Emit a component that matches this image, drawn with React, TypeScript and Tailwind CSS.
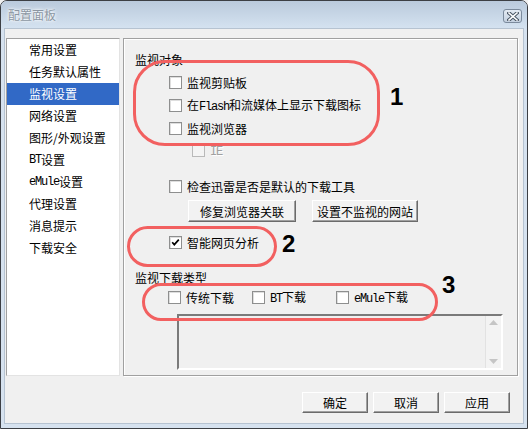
import React from "react";

function Lat({ children }: { children: React.ReactNode }) {
  return (
    <span className="[font-family:'Liberation_Mono',monospace] tracking-[-1.2px]">
      {children}
    </span>
  );
}

function Box({ checked, disabled }: { checked?: boolean; disabled?: boolean }) {
  return (
    <span
      className={
        disabled
          ? "relative block w-[13px] h-[13px] shrink-0 border border-[#b9b9b9] bg-[#f4f4f4]"
          : "relative block w-[13px] h-[13px] shrink-0 border border-[#8e8f8f] bg-white shadow-[inset_1px_1px_0_#dedede]"
      }
    >
      {checked && (
        <svg width="11" height="11" viewBox="0 0 11 11" className="absolute left-0 top-0">
          <path d="M2.2 5.2 L4.3 7.6 L8.8 2.6" fill="none" stroke="#000" strokeWidth="1.7" />
        </svg>
      )}
    </span>
  );
}

function Row({
  children,
  checked,
  disabled,
}: {
  children: React.ReactNode;
  checked?: boolean;
  disabled?: boolean;
}) {
  return (
    <div className="flex items-center h-[13px]">
      <Box checked={checked} disabled={disabled} />
      <span
        className={
          disabled
            ? "ml-[5px] leading-[13px] whitespace-nowrap text-[#a0a0a0] [text-shadow:1px_1px_0_#ffffff]"
            : "ml-[5px] leading-[13px] whitespace-nowrap"
        }
      >
        {children}
      </span>
    </div>
  );
}

function Btn({ children, w, h }: { children: React.ReactNode; w: string; h: string }) {
  return (
    <div
      className={`${w} ${h} flex items-center justify-center bg-[#f2f2f2] border border-t-[#ffffff] border-l-[#ffffff] border-r-[#6b6b6b] border-b-[#6b6b6b] shadow-[inset_-1px_-1px_0_#a0a0a0] leading-[13px] whitespace-nowrap`}
    >
      {children}
    </div>
  );
}

const items = [
  "常用设置",
  "任务默认属性",
  "监视设置",
  "网络设置",
  "图形/外观设置",
  "BT设置",
  "eMule设置",
  "代理设置",
  "消息提示",
  "下载安全",
];

export default function App() {
  return (
    <div className="relative w-[528px] h-[429px] overflow-hidden bg-[#f0f0f0]">
      <div className="w-[528px] h-[429px] flex flex-col border border-[#3c3f44] rounded-t-[7px] bg-[#d6e2ef] text-[12px] text-black [font-family:'Noto_Sans_CJK_SC',sans-serif]">
        {/* title bar */}
        <div className="h-[27px] shrink-0 flex items-start rounded-t-[6px] bg-gradient-to-b from-[#bacadc] to-[#d4e2f0]">
          <div className="ml-[7px] mt-[6px] leading-[16px] text-[12px] text-[#8b96a2] [text-shadow:0_0_4px_#ffffff,0_0_2px_#ffffff]">
            配置面板
          </div>
          <div className="ml-auto mr-[5px] mt-[8px] w-[19px] h-[14px] rounded-[3px] border border-[#7b8a9c] bg-gradient-to-b from-[#e4ebf3] to-[#c3d0df] flex items-center justify-center">
            <svg width="12" height="9" viewBox="0 0 12 9">
              <path d="M2 1 L10 8 M10 1 L2 8" stroke="#4a5664" strokeWidth="3.6" strokeLinecap="square" />
              <path d="M2 1 L10 8 M10 1 L2 8" stroke="#ffffff" strokeWidth="1.6" strokeLinecap="square" />
            </svg>
          </div>
        </div>

        {/* client */}
        <div className="flex-1 mx-[3px] mb-[4px] bg-[#f0f0f0] border border-[#b6c3d1] flex flex-col">
          <div className="flex pl-[1px] pt-[9px] pr-[4px]">
            {/* left list */}
            <div className="w-[114px] h-[338px] bg-white border border-t-[#a0a0a0] border-l-[#a0a0a0] border-r-[#e3e3e3] border-b-[#e3e3e3] flex flex-col">
              {items.map((t, i) => (
                <div
                  key={t}
                  className={
                    i === 2
                      ? "h-[22px] shrink-0 flex items-center pl-[22px] bg-[#3169c6] text-white whitespace-nowrap"
                      : "h-[22px] shrink-0 flex items-center pl-[22px] whitespace-nowrap"
                  }
                >
                  {t === "BT设置" ? (
                    <>
                      <Lat>BT</Lat>设置
                    </>
                  ) : t === "eMule设置" ? (
                    <>
                      <Lat>eMule</Lat>设置
                    </>
                  ) : (
                    t
                  )}
                </div>
              ))}
            </div>

            {/* right panel */}
            <div className="ml-[3px] w-[395px] h-[338px] border border-t-[#a0a0a0] border-l-[#a0a0a0] border-r-[#a0a0a0] border-b-[#a0a0a0] shadow-[inset_1px_1px_0_#ffffff,1px_1px_0_#ffffff] flex flex-col pl-[11px] pt-[14px]">
              <div className="h-[13px] leading-[13px]">监视对象</div>
              <div className="pl-[34px] mt-[10px]">
                <Row>监视剪贴板</Row>
              </div>
              <div className="pl-[34px] mt-[10px]">
                <Row>
                  在<Lat>Flash</Lat>和流媒体上显示下载图标
                </Row>
              </div>
              <div className="pl-[34px] mt-[10px]">
                <Row>监视浏览器</Row>
              </div>
              <div className="pl-[57px] mt-[9px]">
                <Row disabled>
                  <Lat>IE</Lat>
                </Row>
              </div>
              <div className="pl-[34px] mt-[23px]">
                <Row>检查迅雷是否是默认的下载工具</Row>
              </div>
              <div className="pl-[53px] mt-[7px] flex">
                <Btn w="w-[108px]" h="h-[22px]">修复浏览器关联</Btn>
                <div className="ml-[16px]">
                  <Btn w="w-[106px]" h="h-[22px]">设置不监视的网站</Btn>
                </div>
              </div>
              <div className="pl-[34px] mt-[14px]">
                <Row checked>智能网页分析</Row>
              </div>
              <div className="h-[13px] leading-[13px] mt-[22px]">监视下载类型</div>
              <div className="pl-[33px] mt-[7px] flex">
                <div className="w-[84px]">
                  <Row>传统下载</Row>
                </div>
                <div className="w-[84px]">
                  <Row>
                    <Lat>BT</Lat>下载
                  </Row>
                </div>
                <div className="w-[84px]">
                  <Row>
                    <Lat>eMule</Lat>下载
                  </Row>
                </div>
              </div>
              <div className="ml-[42px] mt-[10px] w-[326px] h-[56px] flex border-2 border-t-[#7a7a7a] border-l-[#7a7a7a] border-r-[#ffffff] border-b-[#ffffff] bg-[#f0f0f0]">
                <div className="flex-1" />
                <div className="w-[16px] bg-[#f3f3f3] border-l border-[#e2e2e2] flex flex-col items-center justify-between py-[4px]">
                  <svg width="9" height="5" viewBox="0 0 9 5">
                    <path d="M0 5 L4.5 0 L9 5 Z" fill="#c5c5c5" />
                  </svg>
                  <svg width="9" height="5" viewBox="0 0 9 5">
                    <path d="M0 0 L4.5 5 L9 0 Z" fill="#c5c5c5" />
                  </svg>
                </div>
              </div>
            </div>
          </div>

          {/* bottom buttons */}
          <div className="flex justify-end pr-[13px] mt-[16px]">
            <Btn w="w-[66px]" h="h-[21px]">确定</Btn>
            <div className="ml-[5px]">
              <Btn w="w-[66px]" h="h-[21px]">取消</Btn>
            </div>
            <div className="ml-[5px]">
              <Btn w="w-[66px]" h="h-[21px]">应用</Btn>
            </div>
          </div>
        </div>
      </div>

      {/* annotations */}
      <div className="absolute left-[133px] top-[60px] w-[247px] h-[86px] rounded-[32px] border-[3px] border-[#f26060]" />
      <div className="absolute left-[127px] top-[226px] w-[150px] h-[41px] rounded-[21px] border-[3px] border-[#f26060]" />
      <div className="absolute left-[142px] top-[283px] w-[296px] h-[38px] rounded-[19px] border-[3px] border-[#f26060]" />
      <div className="absolute left-[390px] top-[84px] text-[24px] leading-[26px] font-bold [font-family:'Liberation_Sans',Arial,sans-serif]">1</div>
      <div className="absolute left-[282px] top-[231px] text-[24px] leading-[26px] font-bold [font-family:'Liberation_Sans',Arial,sans-serif]">2</div>
      <div className="absolute left-[442px] top-[272px] text-[24px] leading-[26px] font-bold [font-family:'Liberation_Sans',Arial,sans-serif]">3</div>
    </div>
  );
}
